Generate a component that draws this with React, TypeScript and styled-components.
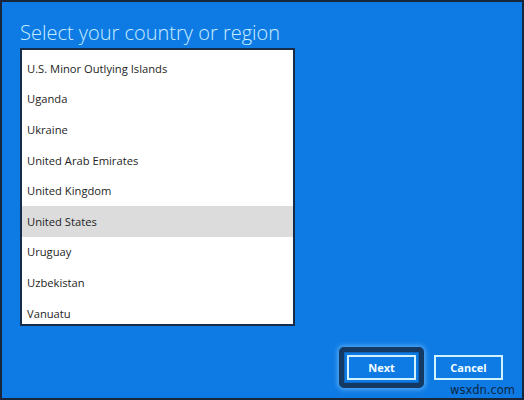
import React from 'react'
import styled, { createGlobalStyle } from 'styled-components'

const GlobalStyle = createGlobalStyle`
  html, body {
    margin: 0;
    padding: 0;
    background: #0e7be4;
  }
  * {
    box-sizing: border-box;
  }
`

const Screen = styled.div`
  position: relative;
  width: 524px;
  height: 400px;
  background: #0e7be4;
  border: 2px solid #17263a;
  padding: 16px 19px 0 18px;
  display: flex;
  flex-direction: column;
  font-family: 'Open Sans', 'Noto Sans', sans-serif;
  overflow: hidden;
`

const Title = styled.h1`
  margin: 0 0 1px 0;
  font-size: 20px;
  font-weight: 300;
  line-height: 29px;
  color: #c9edff;
`

const ListBox = styled.div`
  width: 275px;
  height: 278px;
  background: #fff;
  border: 2px solid #162c48;
  padding-top: 3px;
  overflow: hidden;
`

const Item = styled.div<{ $selected?: boolean }>`
  height: 30.6px;
  display: flex;
  align-items: center;
  padding-left: 5px;
  font-size: 11.2px;
  color: #1e1e1e;
  background: ${p => (p.$selected ? '#dcdcdc' : 'transparent')};
`

const Footer = styled.div`
  display: flex;
  justify-content: flex-end;
  gap: 18px;
  margin-top: 29px;
`

const Button = styled.button<{ $focused?: boolean }>`
  position: relative;
  width: 69px;
  height: 25px;
  border: 2px solid #d2f2ff;
  background: #0e7be4;
  color: #f2fbff;
  font-family: 'Open Sans', 'Noto Sans', sans-serif;
  font-weight: 700;
  font-size: 11px;
  padding: 0;
  border-radius: 0;

  /* keyboard focus ring */
  &::before {
    content: '';
    display: ${p => (p.$focused ? 'block' : 'none')};
    position: absolute;
    inset: -10px;
    border: 5px solid #143a64;
    border-radius: 5px;
    background: transparent;
    box-shadow: 0 0 4px 2px rgba(120, 190, 250, 0.6), inset 0 0 0 1px #0b66c2;
  }
`

const Watermark = styled.span`
  position: absolute;
  right: 7px;
  bottom: 1px;
  font-family: 'DejaVu Sans', sans-serif;
  font-size: 11.5px;
  color: #0c2540;
`

const countries = [
  'U.S. Minor Outlying Islands',
  'Uganda',
  'Ukraine',
  'United Arab Emirates',
  'United Kingdom',
  'United States',
  'Uruguay',
  'Uzbekistan',
  'Vanuatu',
]

export default function App() {
  return (
    <>
      <GlobalStyle />
      <Screen>
        <Title>Select your country or region</Title>
        <ListBox>
          {countries.map(c => (
            <Item key={c} $selected={c === 'United States'}>
              {c}
            </Item>
          ))}
        </ListBox>
        <Footer>
          <Button $focused>Next</Button>
          <Button>Cancel</Button>
        </Footer>
        <Watermark>wsxdn.com</Watermark>
      </Screen>
    </>
  )
}
